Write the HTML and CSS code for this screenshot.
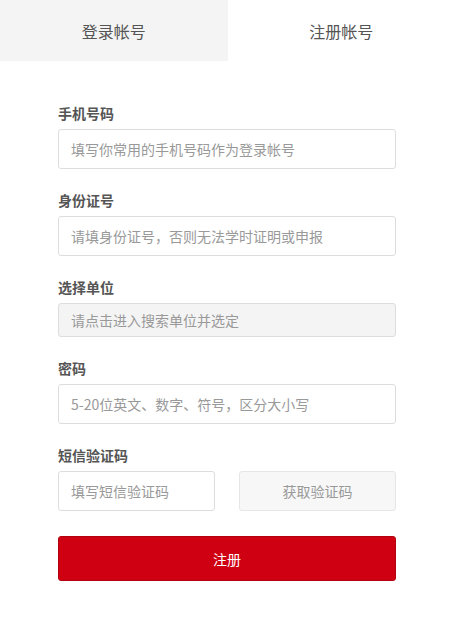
FILE: index.html
```html
<!DOCTYPE html>
<html>
<head>
    <meta charset="utf-8">
    <title>注册帐号</title>
    <link rel="stylesheet" href="styles.css">
</head>
<body>
    <div class="tabs">
        <div class="tab tab-off">登录帐号</div>
        <div class="tab tab-on">注册帐号</div>
    </div>

    <form class="reg-form">
        <div class="field">
            <label>手机号码</label>
            <input type="text" placeholder="填写你常用的手机号码作为登录帐号">
        </div>
        <div class="field">
            <label>身份证号</label>
            <input type="text" placeholder="请填身份证号，否则无法学时证明或申报">
        </div>
        <div class="field">
            <label>选择单位</label>
            <input type="text" class="input-short" placeholder="请点击进入搜索单位并选定" readonly>
        </div>
        <div class="field">
            <label>密码</label>
            <input type="password" placeholder="5-20位英文、数字、符号，区分大小写">
        </div>
        <div class="field">
            <label>短信验证码</label>
            <div class="sms-row">
                <input type="text" placeholder="填写短信验证码">
                <button type="button" class="sms-btn">获取验证码</button>
            </div>
        </div>
        <button type="button" class="submit-btn">注册</button>
    </form>
</body>
</html>
```

FILE: styles.css
```css
body {
    margin: 0;
    padding: 0;
    font-family: "Noto Sans CJK SC", "Liberation Sans", sans-serif;
    background: #fff;
    color: #555;
}

.tabs {
    display: flex;
    height: 61px;
}

.tab {
    flex: 1;
    display: flex;
    align-items: center;
    justify-content: center;
    font-size: 16px;
    color: #555;
}

.tab-off {
    background: #f4f4f4;
}

.tab-on {
    background: #fff;
}

.reg-form {
    padding: 42px 59px 0 58px;
}

.field {
    margin-bottom: 21px;
}

.field label {
    display: block;
    font-size: 14px;
    font-weight: bold;
    line-height: 20px;
    color: #555;
    margin-bottom: 6px;
}

.field input {
    display: block;
    box-sizing: border-box;
    width: 100%;
    height: 40px;
    padding: 0 12px;
    border: 1px solid #ddd;
    border-radius: 3px;
    font-family: inherit;
    font-size: 14px;
    color: #555;
    background: #fff;
    outline: none;
}

.field input::placeholder {
    color: #999;
}

.field .input-short {
    height: 34px;
    background: #f4f4f4;
}

.sms-row {
    display: grid;
    grid-template-columns: minmax(0, 1fr) minmax(0, 1fr);
    column-gap: 24px;
}

.sms-btn {
    box-sizing: border-box;
    width: 100%;
    height: 40px;
    border: 1px solid #e6e6e6;
    border-radius: 3px;
    background: #f7f7f7;
    color: #999;
    font-family: inherit;
    font-size: 14px;
}

.submit-btn {
    display: block;
    width: 100%;
    height: 45px;
    margin-top: 25px;
    border: 1px solid #b3000f;
    border-radius: 3px;
    background: #cf0011;
    color: #fff;
    font-family: inherit;
    font-size: 14px;
}
```
